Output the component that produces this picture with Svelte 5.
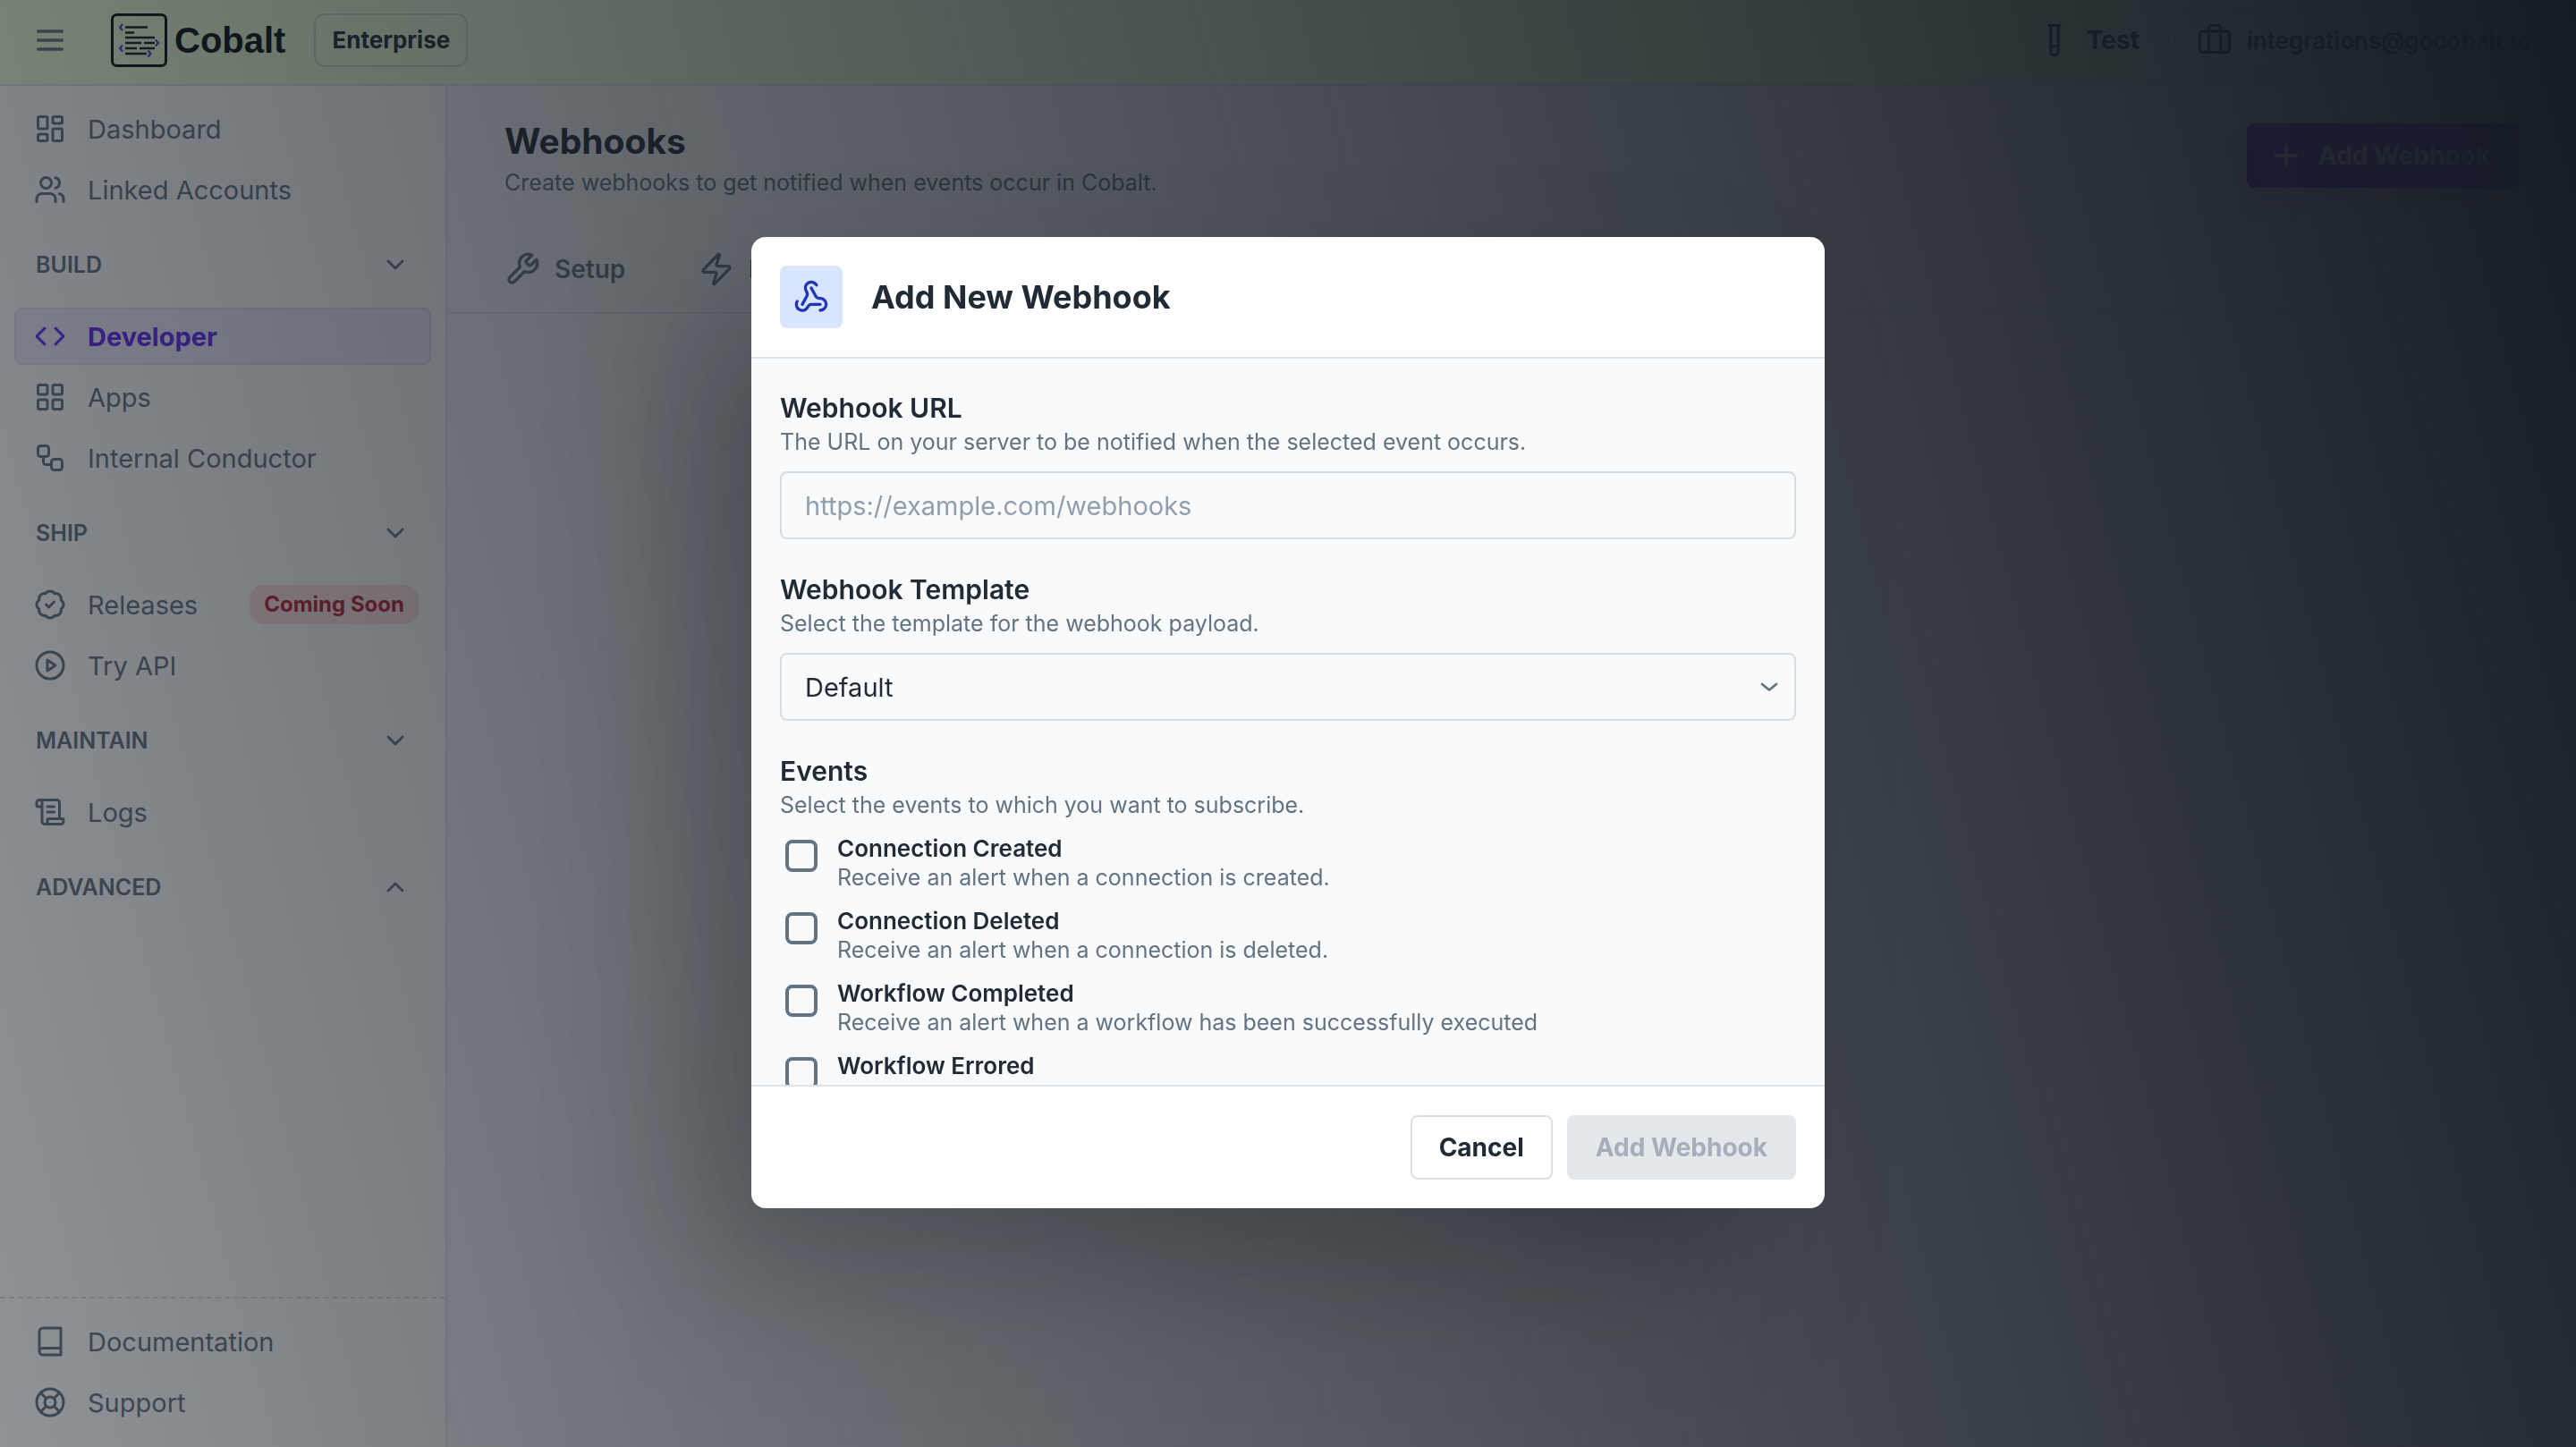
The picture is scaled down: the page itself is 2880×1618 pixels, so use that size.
<script>
  const icons = {
    menu: '<path d="M4 6h16M4 12h16M4 18h16"/>',
    dashboard:
      '<rect width="7" height="9" x="3" y="3" rx="1"/><rect width="7" height="5" x="14" y="3" rx="1"/><rect width="7" height="9" x="14" y="12" rx="1"/><rect width="7" height="5" x="3" y="16" rx="1"/>',
    users:
      '<path d="M16 21v-2a4 4 0 0 0-4-4H6a4 4 0 0 0-4 4v2"/><circle cx="9" cy="7" r="4"/><path d="M22 21v-2a4 4 0 0 0-3-3.87"/><path d="M16 3.13a4 4 0 0 1 0 7.75"/>',
    code: '<path d="m16 18 6-6-6-6"/><path d="m8 6-6 6 6 6"/>',
    apps:
      '<rect width="7" height="7" x="3" y="3" rx="1"/><rect width="7" height="7" x="14" y="3" rx="1"/><rect width="7" height="7" x="14" y="14" rx="1"/><rect width="7" height="7" x="3" y="14" rx="1"/>',
    workflow:
      '<rect width="8" height="8" x="3" y="3" rx="2"/><path d="M7 11v4a2 2 0 0 0 2 2h4"/><rect width="8" height="8" x="13" y="13" rx="2"/>',
    badge:
      '<path d="M3.85 8.62a4 4 0 0 1 4.78-4.77 4 4 0 0 1 6.74 0 4 4 0 0 1 4.78 4.78 4 4 0 0 1 0 6.74 4 4 0 0 1-4.77 4.78 4 4 0 0 1-6.75 0 4 4 0 0 1-4.78-4.77 4 4 0 0 1 0-6.76Z"/><path d="m9 12 2 2 4-4"/>',
    play: '<circle cx="12" cy="12" r="10"/><path d="m10 8 6 4-6 4V8z"/>',
    scroll:
      '<path d="M15 12h-5"/><path d="M15 8h-5"/><path d="M19 17V5a2 2 0 0 0-2-2H4"/><path d="M8 21h12a2 2 0 0 0 2-2v-1a1 1 0 0 0-1-1H11a1 1 0 0 0-1 1v1a2 2 0 1 1-4 0V5a2 2 0 1 0-4 0v2a1 1 0 0 0 1 1h3"/>',
    book: '<path d="M4 19.5v-15A2.5 2.5 0 0 1 6.5 2H20v20H6.5a2.5 2.5 0 0 1 0-5H20"/>',
    support:
      '<circle cx="12" cy="12" r="10"/><path d="m4.93 4.93 4.24 4.24"/><path d="m14.83 9.17 4.24-4.24"/><path d="m14.83 14.83 4.24 4.24"/><path d="m9.17 14.83-4.24 4.24"/><circle cx="12" cy="12" r="4"/>',
    down: '<path d="m6 9 6 6 6-6"/>',
    up: '<path d="m18 15-6-6-6 6"/>',
    tube:
      '<path d="M14.5 2v17.5c0 1.4-1.1 2.5-2.5 2.5c-1.4 0-2.5-1.1-2.5-2.5V2"/><path d="M8.5 2h7"/><path d="M14.5 16h-5"/>',
    briefcase:
      '<path d="M16 20V4a2 2 0 0 0-2-2h-4a2 2 0 0 0-2 2v16"/><rect width="20" height="14" x="2" y="6" rx="2"/>',
    plus: '<path d="M5 12h14M12 5v14"/>',
    wrench:
      '<path d="M14.7 6.3a1 1 0 0 0 0 1.4l1.6 1.6a1 1 0 0 0 1.4 0l3.77-3.77a6 6 0 0 1-7.94 7.94l-6.91 6.91a2.12 2.12 0 0 1-3-3l6.91-6.91a6 6 0 0 1 7.94-7.94l-3.76 3.76z"/>',
    zap:
      '<path d="M4 14a1 1 0 0 1-.78-1.63l9.9-10.2a.5.5 0 0 1 .86.46l-1.92 6.02A1 1 0 0 0 13 10h7a1 1 0 0 1 .78 1.63l-9.9 10.2a.5.5 0 0 1-.86-.46l1.92-6.02A1 1 0 0 0 11 14z"/>',
    webhook:
      '<path d="M18 16.98h-5.99c-1.1 0-1.95.94-2.48 1.9A4 4 0 0 1 2 17c.01-.7.2-1.4.57-2"/><path d="m6 17 3.13-5.78c.53-.97.1-2.18-.5-3.1a4 4 0 1 1 6.89-4.06"/><path d="m12 6 3.13 5.73C15.66 12.7 16.9 13 18 13a4 4 0 0 1 0 8"/>'
  };

  const sections = [
    {
      items: [
        { icon: 'dashboard', label: 'Dashboard' },
        { icon: 'users', label: 'Linked Accounts' }
      ]
    },
    {
      title: 'BUILD',
      open: true,
      items: [
        { icon: 'code', label: 'Developer', active: true },
        { icon: 'apps', label: 'Apps' },
        { icon: 'workflow', label: 'Internal Conductor' }
      ]
    },
    {
      title: 'SHIP',
      open: true,
      items: [
        { icon: 'badge', label: 'Releases', tag: 'Coming Soon' },
        { icon: 'play', label: 'Try API' }
      ]
    },
    { title: 'MAINTAIN', open: true, items: [{ icon: 'scroll', label: 'Logs' }] },
    { title: 'ADVANCED', open: false, items: [] }
  ];

  const footerLinks = [
    { icon: 'book', label: 'Documentation' },
    { icon: 'support', label: 'Support' }
  ];

  const events = [
    { id: 'connection-created', name: 'Connection Created', text: 'Receive an alert when a connection is created.' },
    { id: 'connection-deleted', name: 'Connection Deleted', text: 'Receive an alert when a connection is deleted.' },
    { id: 'workflow-completed', name: 'Workflow Completed', text: 'Receive an alert when a workflow has been successfully executed' },
    { id: 'workflow-errored', name: 'Workflow Errored' }
  ];

  let url = $state('');
</script>

{#snippet icon(name, size = 'md')}
  <svg class="icon {size}" viewBox="0 0 24 24" aria-hidden="true">{@html icons[name]}</svg>
{/snippet}

{#snippet navLink(item)}
  <a class="nav-item" class:active={item.active} href="#{item.label}">
    {@render icon(item.icon)}
    <span>{item.label}</span>
    {#if item.tag}<em class="tag">{item.tag}</em>{/if}
  </a>
{/snippet}

<div class="app">
  <header class="topbar">
    <button class="plain" aria-label="Toggle menu">{@render icon('menu', 'lg')}</button>
    <a class="brand" href="#home">
      <svg class="logo" viewBox="0 0 63 60" aria-hidden="true">
        <rect x="1.5" y="1.5" width="60" height="57" rx="5" fill="none" stroke="#0b0f14" stroke-width="3" />
        <g fill="none" stroke="#161c24" stroke-width="2.4">
          <path d="M16 15.500h25M16 21.500h10M16 27h33M16 33h18M37 33h12M16 39h13M32 39h17M16 45h24" />
        </g>
        <g fill="none" stroke="#5f27f5" stroke-width="2">
          <path d="m13 12-3 3.500 3 3.500M13 35.500l-3 3.500 3 3.500M50 29.500l3 3.500-3 3.500M41.500 41.500l3 3.500-3 3.500" />
        </g>
      </svg>
      <span>Cobalt</span>
    </a>
    <span class="plan">Enterprise</span>
    <div class="spacer"></div>
    <button class="plain env">{@render icon('tube', 'lg')}<span>Test</span></button>
    <button class="account">{@render icon('briefcase', 'lg')}<span>integrations@gocobalt.io</span></button>
  </header>

  <div class="columns">
    <aside class="sidebar">
      <nav>
        {#each sections as section}
          {#if section.title}
            <button class="section">
              <span>{section.title}</span>
              {@render icon(section.open ? 'down' : 'up', 'sm')}
            </button>
          {/if}
          {#each section.items as item}
            {@render navLink(item)}
          {/each}
        {/each}
      </nav>
      <nav class="nav-footer">
        {#each footerLinks as item}
          {@render navLink(item)}
        {/each}
      </nav>
    </aside>

    <main>
      <div class="page-head">
        <div class="intro">
          <div>
            <h1>Webhooks</h1>
            <p>Create webhooks to get notified when events occur in Cobalt.</p>
          </div>
          <button class="primary">{@render icon('plus', 'lg')}<span>Add Webhook</span></button>
        </div>
        <div class="tabs">
          <button class="tab">{@render icon('wrench', 'lg')}<span>Setup</span></button>
          <button class="tab">{@render icon('zap', 'lg')}<span>Events</span></button>
        </div>
      </div>
    </main>
  </div>
</div>

<div class="backdrop">
  <form class="dialog" role="dialog" aria-modal="true" aria-labelledby="dialog-title">
    <div class="dialog-head">
      <span class="tile">{@render icon('webhook', 'lg')}</span>
      <h2 id="dialog-title">Add New Webhook</h2>
    </div>

    <div class="dialog-body">
      <div class="field">
        <label for="url">Webhook URL</label>
        <p>The URL on your server to be notified when the selected event occurs.</p>
        <input id="url" class="control" type="text" placeholder="https://example.com/webhooks" bind:value={url} />
      </div>
      <div class="field">
        <label for="template">Webhook Template</label>
        <p>Select the template for the webhook payload.</p>
        <div class="select">
          <select id="template" class="control"><option>Default</option></select>
          <svg viewBox="0 0 20 12" aria-hidden="true"><path d="m2 3 8 6.500 8-6.500" /></svg>
        </div>
      </div>
      <fieldset class="field">
        <legend>Events</legend>
        <p>Select the events to which you want to subscribe.</p>
        <div class="events">
          {#each events as event}
            <label class="event" for={event.id}>
              <input id={event.id} type="checkbox" />
              <span>
                <strong>{event.name}</strong>
                {#if event.text}<small>{event.text}</small>{/if}
              </span>
            </label>
          {/each}
        </div>
      </fieldset>
    </div>

    <div class="dialog-foot">
      <button type="button" class="cancel">Cancel</button>
      <button type="submit" class="submit" disabled>Add Webhook</button>
    </div>
  </form>
</div>

<style>
  :global(body) {
    background: #fff;
    color: #212b36;
    font-family: Inter, 'Liberation Sans', sans-serif;
  }
  * {
    box-sizing: border-box;
  }
  button,
  input,
  select {
    font: inherit;
    color: inherit;
    margin: 0;
  }
  button {
    display: flex;
    align-items: center;
    background: none;
    border: 0;
    padding: 0;
  }
  a {
    color: inherit;
    text-decoration: none;
  }
  h1,
  h2,
  p {
    margin: 0;
  }

  .icon {
    display: block;
    flex: none;
    width: 36px;
    height: 36px;
    fill: none;
    stroke: currentColor;
    stroke-width: 2;
    stroke-linecap: round;
    stroke-linejoin: round;
  }
  .icon.sm {
    width: 32px;
    height: 32px;
  }
  .icon.lg {
    width: 40px;
    height: 40px;
  }

  .app {
    display: flex;
    flex-direction: column;
    height: 100vh;
  }
  .topbar {
    display: flex;
    align-items: center;
    height: 96px;
    padding: 0 18px 4px 36px;
    background: #e9fcd4;
    border-bottom: 2px solid #dcdfea;
  }
  .plain {
    color: #637381;
  }
  .brand {
    display: flex;
    align-items: center;
    gap: 8px;
    margin: 0 32px 0 48px;
    color: #0b0f14;
    font: 700 40px/60px 'Liberation Sans', Arial, sans-serif;
  }
  .logo {
    display: block;
    width: 63px;
    height: 60px;
  }
  .plan {
    padding: 0 18px;
    border: 2px solid #ccd8c4;
    border-radius: 12px;
    font-size: 26px;
    line-height: 56px;
    font-weight: 700;
  }
  .spacer {
    flex: 1;
  }
  .env {
    gap: 16px;
    margin-right: 32px;
    color: #212b36;
    font-size: 28px;
    font-weight: 700;
  }
  .account {
    gap: 16px;
    height: 72px;
    padding: 0 30px;
    border: 2px solid #d4e0c4;
    border-radius: 16px;
    font-size: 26px;
    font-weight: 600;
  }

  .columns {
    display: flex;
    flex: 1;
    min-height: 0;
  }
  .sidebar {
    display: flex;
    flex-direction: column;
    justify-content: space-between;
    width: 500px;
    flex: none;
    padding-top: 16px;
    border-right: 2px solid #dfe3e8;
    color: #637381;
  }
  .sidebar nav {
    padding: 0 16px;
  }
  .nav-item {
    display: flex;
    align-items: center;
    gap: 24px;
    height: 64px;
    margin-bottom: 4px;
    padding: 0 12px 0 20px;
    border: 2px solid transparent;
    border-radius: 8px;
    font-size: 29px;
  }
  .nav-item.active {
    background: #f1ecfe;
    border-color: #e4dcfc;
    color: #5f27f5;
    font-weight: 700;
  }
  .tag {
    margin-left: auto;
    padding: 0 16px;
    border-radius: 16px;
    background: #ffe2e1;
    color: #b72136;
    font-size: 24px;
    font-style: normal;
    font-weight: 700;
    line-height: 44px;
  }
  .section {
    justify-content: space-between;
    width: 100%;
    height: 96px;
    padding: 0 24px;
    font-size: 25px;
    font-weight: 600;
  }
  .sidebar .nav-footer {
    padding: 16px 16px 14px;
    border-top: 2px dashed #dfe3e8;
  }

  main {
    flex: 1;
    min-width: 0;
    background: #f3f5f7;
  }
  .page-head {
    padding: 32px 64px 0;
    border-bottom: 2px solid #e2e6e9;
  }
  .intro {
    display: flex;
    align-items: center;
    justify-content: space-between;
  }
  h1 {
    font-size: 39px;
    line-height: 60px;
    font-weight: 700;
  }
  .intro p {
    color: #637381;
    font-size: 25px;
    line-height: 32px;
  }
  .primary {
    gap: 16px;
    height: 72px;
    padding: 0 32px 0 24px;
    border-radius: 8px;
    background: #5119e8;
    box-shadow: 0 16px 32px rgba(95, 39, 245, 0.24);
    color: #fff;
    font-size: 28px;
    font-weight: 700;
  }
  .tabs {
    display: flex;
    gap: 82px;
    padding-top: 33px;
  }
  .tab {
    gap: 16px;
    height: 96px;
    color: #637381;
    font-size: 28px;
    font-weight: 600;
  }
  .tab:last-child {
    color: #212b36;
  }
  .tab:last-child .icon {
    color: #637381;
  }

  .backdrop {
    position: fixed;
    inset: 0;
    display: flex;
    align-items: center;
    justify-content: center;
    padding-bottom: 2px;
    background: linear-gradient(75deg, rgba(22, 28, 36, 0.48) 0%, rgb(22, 28, 36) 100%);
  }
  .dialog {
    display: flex;
    flex-direction: column;
    width: 1200px;
    max-width: calc(100vw - 64px);
    max-height: calc(100vh - 128px);
    overflow: hidden;
    border-radius: 16px;
    background: #fff;
    box-shadow: -80px 80px 160px -16px rgba(0, 0, 0, 0.24);
  }
  .dialog-head {
    display: flex;
    align-items: center;
    gap: 32px;
    padding: 32px;
    border-bottom: 2px solid #dfe3e8;
  }
  .tile {
    padding: 15px;
    border-radius: 8px;
    background: #d9e5ff;
    color: #1f35b5;
  }
  h2 {
    font-size: 36px;
    line-height: 48px;
    font-weight: 700;
  }
  .dialog-body {
    display: flex;
    flex-direction: column;
    gap: 35px;
    max-height: 812px;
    min-height: 0;
    padding: 34px 32px 0;
    overflow: hidden;
    background: #f9fafc;
  }
  .field {
    flex: none;
    min-width: 0;
    margin: 0;
    padding: 0;
    border: 0;
  }
  .field > label,
  legend {
    display: block;
    padding: 0;
    font-size: 30px;
    font-weight: 600;
    line-height: 42px;
  }
  .field p {
    color: #637381;
    font-size: 25px;
    line-height: 34px;
  }
  .control {
    display: block;
    width: 100%;
    height: 76px;
    padding: 0 26px;
    border: 2px solid #d6dde2;
    border-radius: 8px;
    background: none;
    appearance: none;
    font-size: 29px;
  }
  .field > .control,
  .select,
  .events {
    margin-top: 16px;
  }
  .control::placeholder {
    color: #919eab;
    opacity: 1;
  }
  .select {
    display: grid;
    align-items: center;
  }
  .select > * {
    grid-area: 1 / 1;
  }
  .select svg {
    justify-self: end;
    width: 20px;
    height: 12px;
    margin-right: 20px;
    fill: none;
    stroke: #637381;
    stroke-width: 2.8;
    stroke-linecap: round;
    stroke-linejoin: round;
    pointer-events: none;
  }
  .events {
    display: flex;
    flex-direction: column;
    gap: 17px;
  }
  .event {
    display: flex;
    gap: 22px;
    padding-left: 6px;
  }
  .event input {
    flex: none;
    width: 36px;
    height: 36px;
    margin-top: 6px;
    border: 4px solid #637381;
    border-radius: 8px;
    appearance: none;
  }
  strong,
  small {
    display: block;
    font-size: 25px;
    line-height: 32px;
  }
  strong {
    font-size: 26px;
    font-weight: 600;
  }
  small {
    color: #637381;
  }
  .dialog-foot {
    display: flex;
    justify-content: flex-end;
    gap: 16px;
    padding: 32px;
    border-top: 2px solid #dfe3e8;
  }
  .dialog-foot button {
    height: 72px;
    padding: 0 32px;
    border-radius: 8px;
    font-size: 28px;
    font-weight: 700;
  }
  .dialog-foot .cancel {
    padding: 0 30px;
    border: 2px solid #dce0e5;
  }
  .submit {
    background: #e4e8eb;
    color: #a5aeba;
  }
</style>
